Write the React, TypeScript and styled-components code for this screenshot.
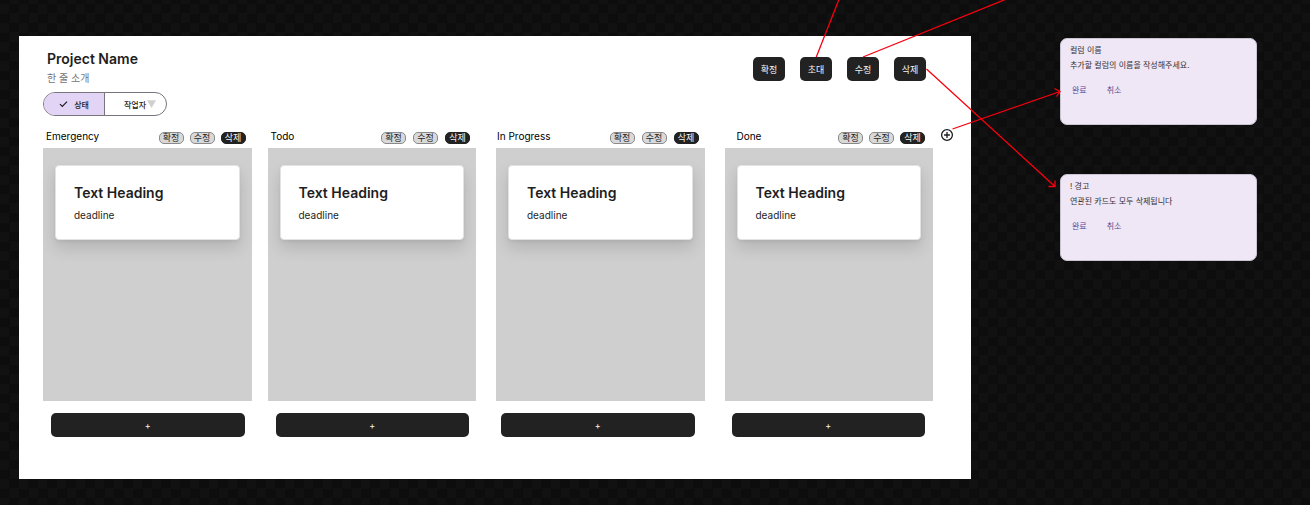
import React from 'react';
import styled, { createGlobalStyle, css } from 'styled-components';

const GlobalStyle = createGlobalStyle`
  *, *::before, *::after { box-sizing: border-box; }
  body {
    margin: 0;
    background-color: #0d0d0d;
    background-image: conic-gradient(#0d0d0d 25%, #111111 0 50%, #0d0d0d 0 75%, #111111 0);
    background-size: 19px 19px;
    background-position: 0 4px;
    color: #1e1e1e;
    font-family: Inter, 'Noto Sans CJK KR', sans-serif;
  }
  button {
    margin: 0;
    padding: 0;
    border: 0;
    background: none;
    color: inherit;
    font: inherit;
    cursor: pointer;
  }
  h1, h2, h3, p { margin: 0; font-weight: 400; }
`;

const Canvas = styled.div`
  position: relative;
  display: flex;
  align-items: flex-start;
  gap: 89px;
  min-height: 100vh;
  padding: 36px 53px 26px 19px;
  overflow: hidden;
`;

const Board = styled.main`
  flex: 1;
  min-width: 0;
  padding: 12px 38px 42px 24px;
  background: #fff;
`;

const BoardHeader = styled.header`
  display: flex;
  justify-content: space-between;
  align-items: flex-start;
  padding: 0 7px 0 4px;
`;

const ProjectName = styled.h1`
  font-size: 14px;
  line-height: 22px;
  font-weight: 600;
`;

const Summary = styled.p`
  color: #757575;
  font-size: 10px;
  line-height: 16px;
`;

const Actions = styled.div`
  display: flex;
  gap: 15px;
  padding-top: 9px;
`;

const ActionButton = styled.button`
  width: 32px;
  height: 24px;
  border-radius: 5px;
  background: #222;
  color: #f5f5f5;
  font-size: 9px;
`;

const Segments = styled.div`
  display: flex;
  width: 124px;
  height: 24px;
  margin-top: 6px;
  border: 1px solid #79747e;
  border-radius: 12px;
  overflow: hidden;
`;

const Segment = styled.button<{ $selected?: boolean }>`
  display: flex;
  flex: 0 0 50%;
  align-items: center;
  justify-content: center;
  gap: ${p => (p.$selected ? 6 : 1)}px;
  padding-left: ${p => (p.$selected ? 0 : 9)}px;
  color: #1d1b20;
  font-size: 8px;
  font-weight: 500;
  ${p => p.$selected && css`
    border-right: 1px solid #79747e;
    background: #e2d4f5;
  `}
`;

const Columns = styled.div`
  position: relative;
  display: flex;
  margin-top: 12px;
`;

const Column = styled.section<{ $gap: number }>`
  flex: 1;
  min-width: 0;
  margin-left: ${p => p.$gap}px;
`;

const ColumnHeader = styled.header<{ $start: number; $end: number }>`
  display: flex;
  align-items: center;
  justify-content: space-between;
  height: 20px;
  padding: 0 ${p => p.$end}px 0 ${p => p.$start}px;
`;

const ColumnTitle = styled.h2`
  padding-bottom: 4px;
  color: #000;
  font-size: 10px;
  line-height: 16px;
`;

const Pills = styled.div<{ $gap: number }>`
  display: flex;
  gap: ${p => p.$gap}px;
`;

const Pill = styled.button<{ $dark?: boolean }>`
  width: 25px;
  height: 12px;
  border: 1px solid ${p => (p.$dark ? '#222' : '#8a8a8a')};
  border-radius: 5px;
  background: ${p => (p.$dark ? '#222' : '#d9d9d9')};
  color: ${p => (p.$dark ? '#f5f5f5' : '#1e1e1e')};
  font-size: 9px;
  line-height: 10px;
`;

const CardList = styled.div`
  height: 253px;
  padding: 17px 12px;
  background: #cfcfcf;
`;

const Card = styled.article`
  height: 75px;
  padding: 16px 18px;
  border: 1px solid #e3e3e3;
  border-radius: 4px;
  background: #fff;
  box-shadow: 0 8px 16px rgba(12, 12, 13, 0.14), 0 2px 3px rgba(12, 12, 13, 0.05);
`;

const CardTitle = styled.h3`
  font-size: 14px;
  line-height: 22px;
  font-weight: 600;
`;

const CardText = styled.p`
  margin-top: 4px;
  font-size: 10px;
  line-height: 14px;
`;

const ColumnFooter = styled.footer<{ $start: number; $end: number }>`
  padding: 12px ${p => p.$end}px 0 ${p => p.$start}px;
`;

const AddCard = styled.button`
  display: block;
  width: 100%;
  height: 24px;
  border-radius: 5px;
  background: #222;
  color: #f5f5f5;
  font-size: 9px;
`;

const AddColumn = styled.button`
  position: absolute;
  top: 0;
  left: calc(100% + 7px);
  width: 14px;
  height: 14px;
  svg { display: block; }
`;

const Dialogs = styled.aside`
  display: flex;
  flex: 0 0 197px;
  flex-direction: column;
  gap: 49px;
  padding-top: 2px;
`;

const Dialog = styled.section`
  height: 87px;
  padding: 4px 9px;
  border: 1px solid #cac4d0;
  border-radius: 7px;
  background: #efe7f5;
  color: #322f35;
  font-size: 8px;
`;

const DialogTitle = styled.h2`
  font-size: 8px;
  line-height: 15px;
`;

const DialogText = styled.p`
  line-height: 15px;
`;

const DialogActions = styled.div`
  display: flex;
  gap: 20px;
  margin-top: 10px;
  padding-left: 2px;
`;

const DialogButton = styled.button`
  color: #5b4690;
  line-height: 14px;
`;

const Arrows = styled.svg`
  position: absolute;
  top: 0;
  right: 0;
  pointer-events: none;
`;

const columns = [
  { title: 'Emergency', gap: 0, start: 3, end: 6, pillGap: 6, foot: [8, 7] },
  { title: 'Todo', gap: 16, start: 3, end: 6, pillGap: 7, foot: [8, 7] },
  { title: 'In Progress', gap: 20, start: 1, end: 6, pillGap: 7, foot: [5, 10] },
  { title: 'Done', gap: 20, start: 12, end: 8, pillGap: 6, foot: [7, 8] },
];

const dialogs = [
  { title: '컬럼 이름', text: '추가할 컬럼의 이름을 작성해주세요.' },
  { title: '! 경고', text: '연관된 카드도 모두 삭제됩니다' },
];

export default function App() {
  return (
    <>
      <GlobalStyle />
      <Canvas>
        <Board>
          <BoardHeader>
            <div>
              <ProjectName>Project Name</ProjectName>
              <Summary>한 줄 소개</Summary>
            </div>
            <Actions>
              {['확정', '초대', '수정', '삭제'].map(label => (
                <ActionButton key={label} type="button">{label}</ActionButton>
              ))}
            </Actions>
          </BoardHeader>
          <Segments role="group">
            <Segment type="button" $selected aria-pressed="true">
              <svg width="9" height="8" viewBox="0 0 9 8" fill="none" stroke="#1d1b20" strokeWidth="1.2">
                <path d="M1 4.2 3.3 6.5 8 1.6" />
              </svg>
              상태
            </Segment>
            <Segment type="button" aria-pressed="false">
              작업자
              <svg width="9" height="8" viewBox="0 0 9 8">
                <path d="M0 0.3H9L4.5 8Z" fill="#d0d0d0" />
              </svg>
            </Segment>
          </Segments>
          <Columns>
            {columns.map(c => (
              <Column key={c.title} $gap={c.gap}>
                <ColumnHeader $start={c.start} $end={c.end}>
                  <ColumnTitle>{c.title}</ColumnTitle>
                  <Pills $gap={c.pillGap}>
                    <Pill type="button">확정</Pill>
                    <Pill type="button">수정</Pill>
                    <Pill type="button" $dark>삭제</Pill>
                  </Pills>
                </ColumnHeader>
                <CardList>
                  <Card>
                    <CardTitle>Text Heading</CardTitle>
                    <CardText>deadline</CardText>
                  </Card>
                </CardList>
                <ColumnFooter $start={c.foot[0]} $end={c.foot[1]}>
                  <AddCard type="button">+</AddCard>
                </ColumnFooter>
              </Column>
            ))}
            <AddColumn type="button">
              <svg width="14" height="14" viewBox="0 0 14 14" fill="none" stroke="#1d1b20" strokeWidth="1.3">
                <circle cx="7" cy="7" r="5.4" />
                <path d="M7 4.1V9.9M4.1 7H9.9" />
              </svg>
            </AddColumn>
          </Columns>
        </Board>
        <Dialogs>
          {dialogs.map(d => (
            <Dialog key={d.title}>
              <DialogTitle>{d.title}</DialogTitle>
              <DialogText>{d.text}</DialogText>
              <DialogActions>
                <DialogButton type="button">완료</DialogButton>
                <DialogButton type="button">취소</DialogButton>
              </DialogActions>
            </Dialog>
          ))}
        </Dialogs>
        <Arrows width="510" height="200" viewBox="800 0 510 200" fill="none" stroke="#f8000f" strokeWidth="1.3">
          <path d="M839.5 -2 816.3 57" />
          <path d="M1009 -2 863 57" />
          <path d="M952.5 129 1060 91.5M1054.5 88.500 1060 91.5 1056.500 96.500" />
          <path d="M926.500 69 1055 186.500M1048.500 186.500H1055V180.500" />
        </Arrows>
      </Canvas>
    </>
  );
}
